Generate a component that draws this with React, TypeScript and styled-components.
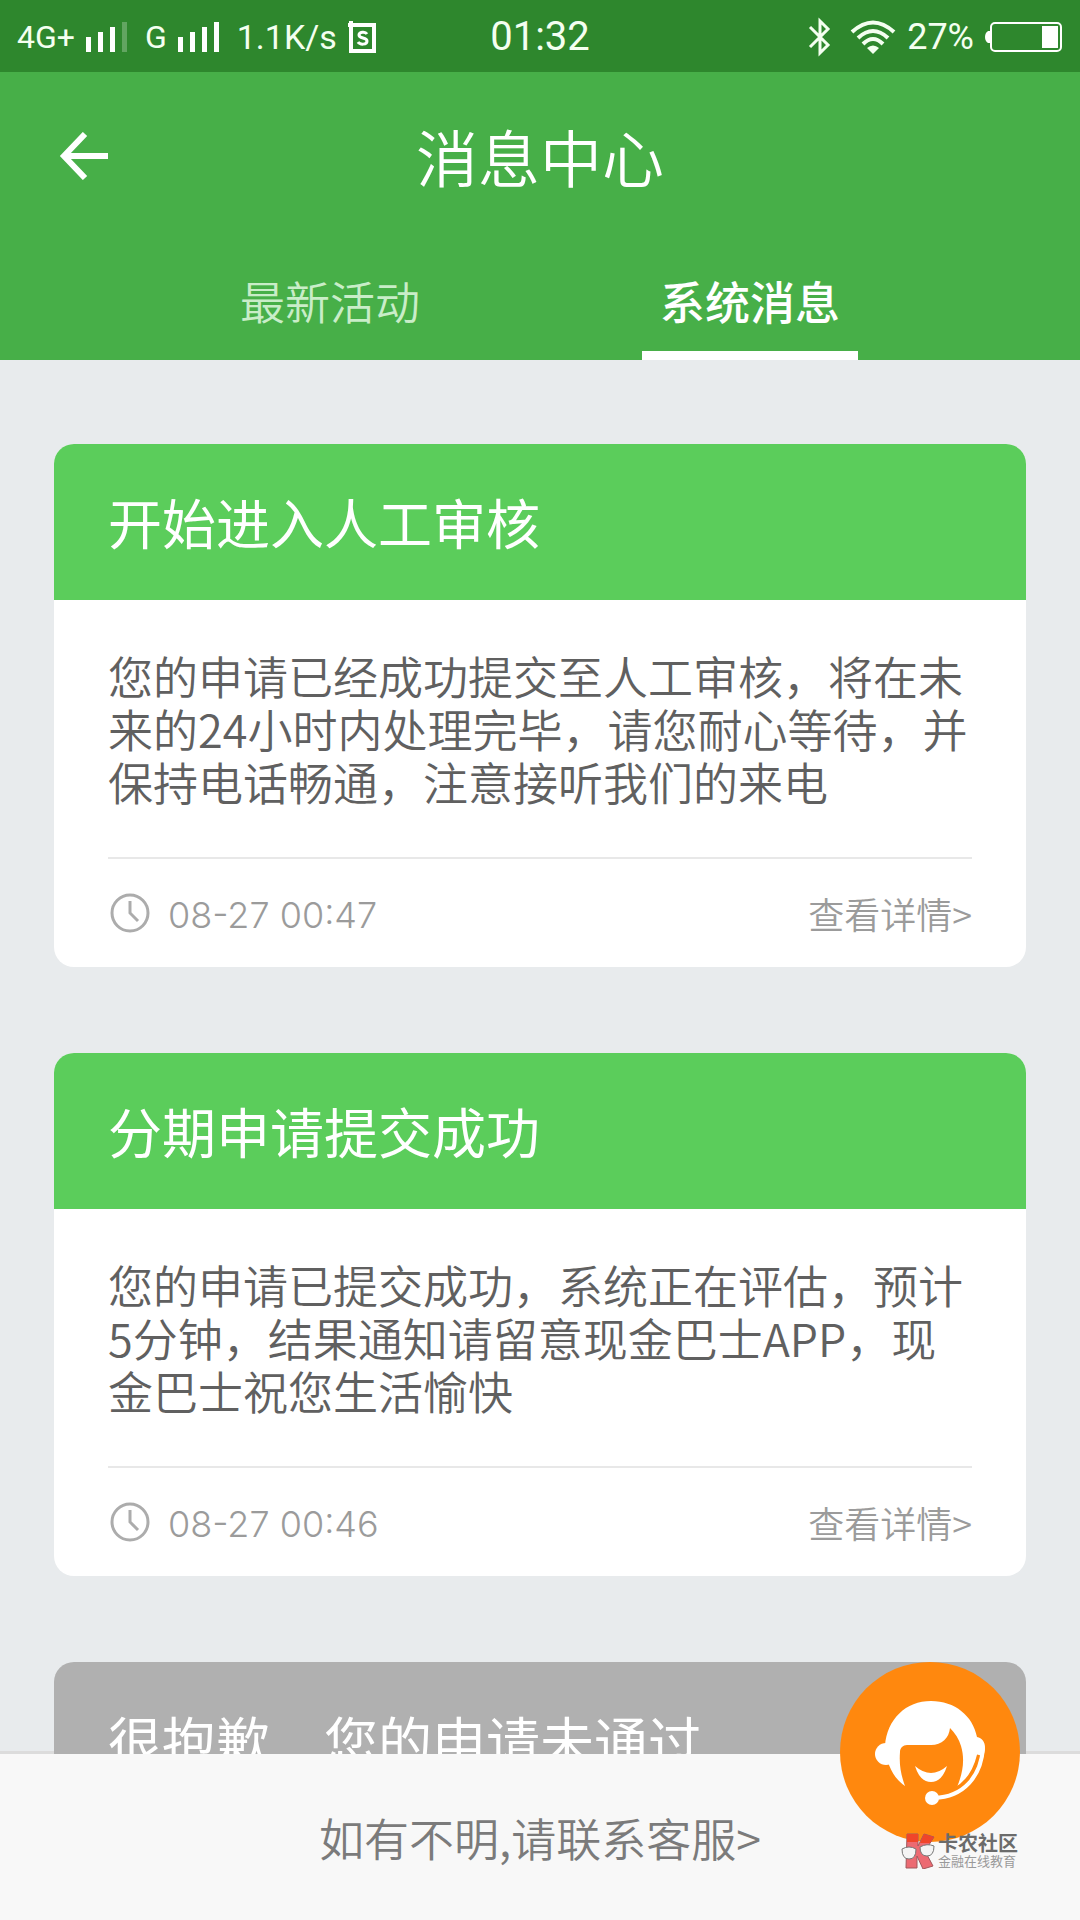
import React from "react";
import styled, { createGlobalStyle } from "styled-components";

const cjk = `"Noto Sans CJK SC", sans-serif`;

const GlobalStyle = createGlobalStyle`
  * { box-sizing: border-box; }
  body { margin: 0; background: #e8ebed; }
  button { font: inherit; color: inherit; background: none; border: 0; padding: 0; cursor: pointer; }
  h1, h2, p { margin: 0; font-weight: inherit; }
`;

const Screen = styled.div`
  position: relative;
  display: flex;
  flex-direction: column;
  height: 100vh;
  overflow: hidden;
  background: #e8ebed;
  font-family: ${cjk};
`;

const StatusBar = styled.div`
  display: grid;
  grid-template-columns: 1fr auto 1fr;
  align-items: center;
  height: 72px;
  padding: 2px 17px 0;
  background: #2e872d;
  color: #f4fff0;
  font-family: Roboto, ${cjk};
`;

const StatusSide = styled.div<{ $end?: boolean }>`
  display: flex;
  align-items: center;
  justify-content: ${(p) => (p.$end ? "flex-end" : "flex-start")};
  gap: 18px;
`;

const StatusGroup = styled.div`
  display: flex;
  align-items: center;
  gap: 11px;
`;

const StatusText = styled.span<{ $size: number }>`
  font-size: ${(p) => p.$size}px;
  line-height: 40px;
  white-space: nowrap;
`;

const Header = styled.header`
  background: #47af48;
  color: #fff;
`;

const TitleRow = styled.div`
  display: grid;
  grid-template-columns: 108px 1fr 108px;
  align-items: center;
  height: 168px;
  padding: 0 30px;
`;

const BackButton = styled.button`
  display: flex;
  justify-content: center;
`;

const PageTitle = styled.h1`
  font-size: 62px;
  font-weight: 350;
  line-height: 80px;
  text-align: center;
`;

const Tabs = styled.nav`
  display: flex;
  justify-content: center;
  gap: 204px;
`;

const Tab = styled.button<{ $active?: boolean }>`
  && {
    width: 216px;
    height: 120px;
    padding-top: 10px;
    border-bottom: 9px solid ${(p) => (p.$active ? "#fff" : "transparent")};
    color: ${(p) => (p.$active ? "#fff" : "#c9edc8")};
    font-size: 45px;
    font-weight: ${(p) => (p.$active ? 500 : 350)};
    line-height: 60px;
  }
`;

const MessageList = styled.main`
  flex: 1;
  min-height: 0;
  display: flex;
  flex-direction: column;
  gap: 86px;
  padding: 84px 54px 0;
  background: linear-gradient(#dcdcdc, #dcdcdc) bottom / 100% 3px no-repeat;
  overflow-y: auto;
  scrollbar-width: none;
`;

const Card = styled.article`
  flex: none;
  border-radius: 20px;
  background: #fff;
  overflow: hidden;
`;

const CardTitle = styled.h2<{ $muted?: boolean }>`
  padding: 38px 54px;
  background: ${(p) => (p.$muted ? "#b0b0b0" : "#5bcd5b")};
  color: #fff;
  font-size: 54px;
  font-weight: 400;
  line-height: 80px;
  white-space: nowrap;
`;

const CardBody = styled.div`
  padding: 49px 54px 0;
`;

const CardText = styled.p`
  color: #606060;
  font-size: 45px;
  font-weight: 350;
  line-height: 53px;
`;

const CardFooter = styled.div`
  display: flex;
  align-items: center;
  justify-content: space-between;
  height: 110px;
  margin-top: 49px;
  border-top: 2px solid #e8e8e8;
  color: #9b9b9b;
  font-size: 36px;
  font-weight: 350;
`;

const Timestamp = styled.div`
  display: flex;
  align-items: center;
  gap: 16px;
  padding-left: 2px;
  font-family: Inter, ${cjk};
  font-weight: 300;
`;

const Time = styled.time`
  padding-top: 4px;
`;

const DetailLink = styled.a`
  color: inherit;
  text-decoration: none;
`;

const ContactBar = styled.footer`
  display: flex;
  align-items: center;
  justify-content: center;
  height: 166px;
  padding-top: 2px;
  background: #f8f8f8;
`;

const ContactLink = styled.a`
  color: #7b7b7b;
  font-size: 45px;
  font-weight: 350;
  line-height: 60px;
  text-decoration: none;
`;

const SupportButton = styled.button`
  position: absolute;
  right: 60px;
  bottom: 78px;
  width: 180px;
  height: 180px;
`;

const Watermark = styled.div`
  position: absolute;
  right: 62px;
  bottom: 51px;
  display: flex;
  align-items: center;
  gap: 3px;
  color: #6b6b6b;
`;

const WatermarkText = styled.div`
  display: flex;
  flex-direction: column;
`;

const WatermarkName = styled.span`
  font-size: 20px;
  font-weight: 700;
  line-height: 20px;
`;

const WatermarkTag = styled.span`
  color: #9a9a9a;
  font-size: 13px;
  line-height: 16px;
`;

const Signal = ({ level }: { level: number }) => (
  <svg width="41" height="30" viewBox="0 0 41 30" fill="#fff" aria-hidden="true">
    {[0, 1, 2, 3].map((i) => (
      <rect key={i} x={i * 12} y={15 - i * 5} width="5" height={15 + i * 5} opacity={i < level ? 1 : 0.25} />
    ))}
  </svg>
);

const ClockIcon = () => (
  <svg width="42" height="42" viewBox="0 0 42 42" fill="none" stroke="#acacac" strokeWidth="3" aria-hidden="true">
    <circle cx="20" cy="21" r="18" />
    <path d="M20 9v12l8 8" />
  </svg>
);

type Message = { title: string; muted?: boolean; text?: string; time?: string };

const messages: Message[] = [
  {
    title: "开始进入人工审核",
    text: "您的申请已经成功提交至人工审核，将在未来的24小时内处理完毕，请您耐心等待，并保持电话畅通，注意接听我们的来电",
    time: "08-27 00:47",
  },
  {
    title: "分期申请提交成功",
    text: "您的申请已提交成功，系统正在评估，预计5分钟，结果通知请留意现金巴士APP，现金巴士祝您生活愉快",
    time: "08-27 00:46",
  },
  { title: "很抱歉　您的申请未通过", muted: true },
];

export default function App() {
  return (
    <Screen>
      <GlobalStyle />
      <StatusBar>
        <StatusSide>
          <StatusGroup>
            <StatusText $size={32}>4G+</StatusText>
            <Signal level={3} />
          </StatusGroup>
          <StatusGroup>
            <StatusText $size={32}>G</StatusText>
            <Signal level={4} />
          </StatusGroup>
          <StatusGroup>
            <StatusText $size={34}>1.1K/s</StatusText>
            <svg width="30" height="34" viewBox="0 0 30 34" fill="none" stroke="#fff" aria-hidden="true">
              <path d="M3 1v30h23V5H0" strokeWidth="4" />
              <path d="M19 14c-2-3-8-2-8 1 0 4 8 2 8 6 0 4-7 4-9 1" strokeWidth="3" />
            </svg>
          </StatusGroup>
        </StatusSide>
        <StatusText $size={40}>01:32</StatusText>
        <StatusSide $end>
          <svg width="24" height="40" viewBox="0 0 24 40" fill="none" stroke="#f4fff0" strokeWidth="3" aria-hidden="true">
            <path d="M2 10l18 18-8 8V4l8 8L2 30" />
          </svg>
          <StatusGroup>
            <svg width="46" height="34" viewBox="0 0 46 34" fill="none" stroke="#f4fff0" strokeWidth="4" aria-hidden="true">
              <path d="M2 12Q23-7 44 12M8 18Q23 4 38 18M13 24Q23 14 33 24" />
              <path d="M17 28q6-5 12 0l-6 6z" fill="#f4fff0" stroke="none" />
            </svg>
            <StatusText $size={36}>27%</StatusText>
            <svg width="78" height="32" viewBox="0 0 78 32" fill="none" aria-hidden="true">
              <path d="M5 10v12H3q-3-2-3-6t3-6z" fill="#fff" />
              <rect x="6" y="2" width="70" height="28" rx="4" stroke="#fff" strokeWidth="2" />
              <rect x="57" y="5" width="16" height="22" fill="#fff" />
            </svg>
          </StatusGroup>
        </StatusSide>
      </StatusBar>

      <Header>
        <TitleRow>
          <BackButton aria-label="返回">
            <svg width="50" height="48" viewBox="0 0 50 48" fill="none" stroke="#fff" strokeWidth="6" aria-hidden="true">
              <path d="M26 2L5 24l21 22M5 24h44" />
            </svg>
          </BackButton>
          <PageTitle>消息中心</PageTitle>
        </TitleRow>
        <Tabs>
          <Tab>最新活动</Tab>
          <Tab $active>系统消息</Tab>
        </Tabs>
      </Header>

      <MessageList>
        {messages.map((m) => (
          <Card key={m.title}>
            <CardTitle $muted={m.muted}>{m.title}</CardTitle>
            {m.text && (
              <CardBody>
                <CardText>{m.text}</CardText>
                <CardFooter>
                  <Timestamp>
                    <ClockIcon />
                    <Time>{m.time}</Time>
                  </Timestamp>
                  <DetailLink href="#detail">查看详情&gt;</DetailLink>
                </CardFooter>
              </CardBody>
            )}
          </Card>
        ))}
      </MessageList>

      <ContactBar>
        <ContactLink href="#contact">如有不明,请联系客服&gt;</ContactLink>
      </ContactBar>

      <SupportButton aria-label="客服">
        <svg width="180" height="180" viewBox="0 0 180 180" aria-hidden="true">
          <circle cx="90" cy="90" r="90" fill="#ff880e" />
          <circle cx="46" cy="92" r="11" fill="#fff" />
          <path
            fill="#fff"
            d="M45 84C47 57 66 39 91 39c24 0 42 15 46 36 5 1 8 5 8 10 0 8-4 16-11 22-4 8-9 13-17 18 6-14 8-28 4-41-2-7-6-13-11-18-1 10-8 17-19 17H67c-4 0-7 3-7 7-1 13 1 23 5 34-7-5-12-11-16-21z"
          />
          <path d="M75 104q16 14 32 0-5 16-16 16t-16-16z" fill="#fff" />
          <path d="M139 93c-5 21-18 37-42 40" fill="none" stroke="#ff880e" strokeWidth="4" />
          <path d="M143 86c-2 28-19 49-49 50" fill="none" stroke="#fff" strokeWidth="4" />
          <circle cx="92" cy="136" r="7" fill="#fff" />
        </svg>
      </SupportButton>

      <Watermark>
        <svg width="34" height="36" viewBox="0 0 34 36" aria-hidden="true">
          <path d="M6 1h11v12l6-12 10 3-9 14 8 15-10 3-6-13v12H5z" fill="#ec6a72" stroke="#a0585c" />
          <path d="M6 1h11v8H6zM23 1l10 3-4 6h-10z" fill="#f0452a" />
          <path d="M1 16q7-4 14 0 0 10-7 10t-7-10zM19 14q7-4 14-1 0 10-7 10t-7-9z" fill="#f4f4f4" stroke="#777" />
        </svg>
        <WatermarkText>
          <WatermarkName>卡农社区</WatermarkName>
          <WatermarkTag>金融在线教育</WatermarkTag>
        </WatermarkText>
      </Watermark>
    </Screen>
  );
}
